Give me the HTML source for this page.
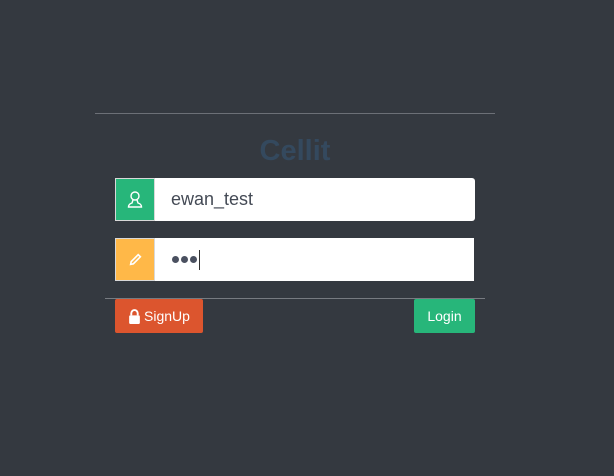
<!DOCTYPE html>
<html><head><style>
body{margin:0;width:614px;height:476px;background:#343940;font-family:"Liberation Sans",sans-serif;position:relative;overflow:hidden}
.a{position:absolute}
.hr{height:1px;background:#6c7077}
.addon{width:38px;height:41px;border:1px solid #d8d8d8;display:flex;align-items:center;justify-content:center}
.inp{background:#fff;height:43px;border-radius:0 3px 3px 0}
.btn{color:#fff;font-size:14px;display:flex;align-items:center;justify-content:center;border-radius:2px;height:34px}
</style></head><body>
<div class="a hr" style="left:95px;top:113px;width:400px"></div>
<div class="a" style="left:0;width:590px;top:135px;text-align:center;font-size:29px;font-weight:bold;color:#34495e">Cellit</div>
<div class="a addon" style="left:115px;top:178px;background:#27b67a">
<svg width="16" height="17" viewBox="0 0 16 17" fill="none" stroke="#fff" stroke-width="1.4"><circle cx="8" cy="5" r="4"/><path d="M6 9 L5 12 Q1.5 13 1.5 16 H14.5 Q14.5 13 11 12 L10 9"/></svg></div>
<div class="a inp" style="left:155px;top:178px;width:320px"></div>
<div class="a" style="left:171px;top:189px;font-size:18px;color:#444a55">ewan_test</div>
<div class="a addon" style="left:115px;top:238px;background:#ffb848">
<svg width="13" height="13" viewBox="0 0 12 12" fill="none" stroke="#fff" stroke-width="1.5"><path d="M1.5 10.5 L2 8 L8.5 1.5 L10.5 3.5 L4 10 Z"/></svg></div>
<div class="a inp" style="left:155px;top:238px;width:319px;border-radius:0"></div>
<div class="a" style="left:172px;top:256px;display:flex;gap:2px"><span style="width:7px;height:7px;border-radius:50%;background:#4a5060"></span><span style="width:7px;height:7px;border-radius:50%;background:#4a5060"></span><span style="width:7px;height:7px;border-radius:50%;background:#4a5060"></span></div>
<div class="a" style="left:199px;top:250px;width:1px;height:20px;background:#333"></div>
<div class="a hr" style="left:105px;top:298px;width:380px;background:#777b81"></div>
<div class="a btn" style="left:115px;top:299px;width:88px;background:#dc552e">
<svg width="13" height="15" viewBox="0 0 12 14" style="margin-right:3px"><path d="M3 6 V4 a3 3 0 0 1 6 0 V6" fill="none" stroke="#fff" stroke-width="1.8"/><rect x="1" y="6" width="10" height="8" rx="1" fill="#fff"/></svg>SignUp</div>
<div class="a btn" style="left:414px;top:299px;width:61px;background:#27b67a">Login</div>
</body></html>
